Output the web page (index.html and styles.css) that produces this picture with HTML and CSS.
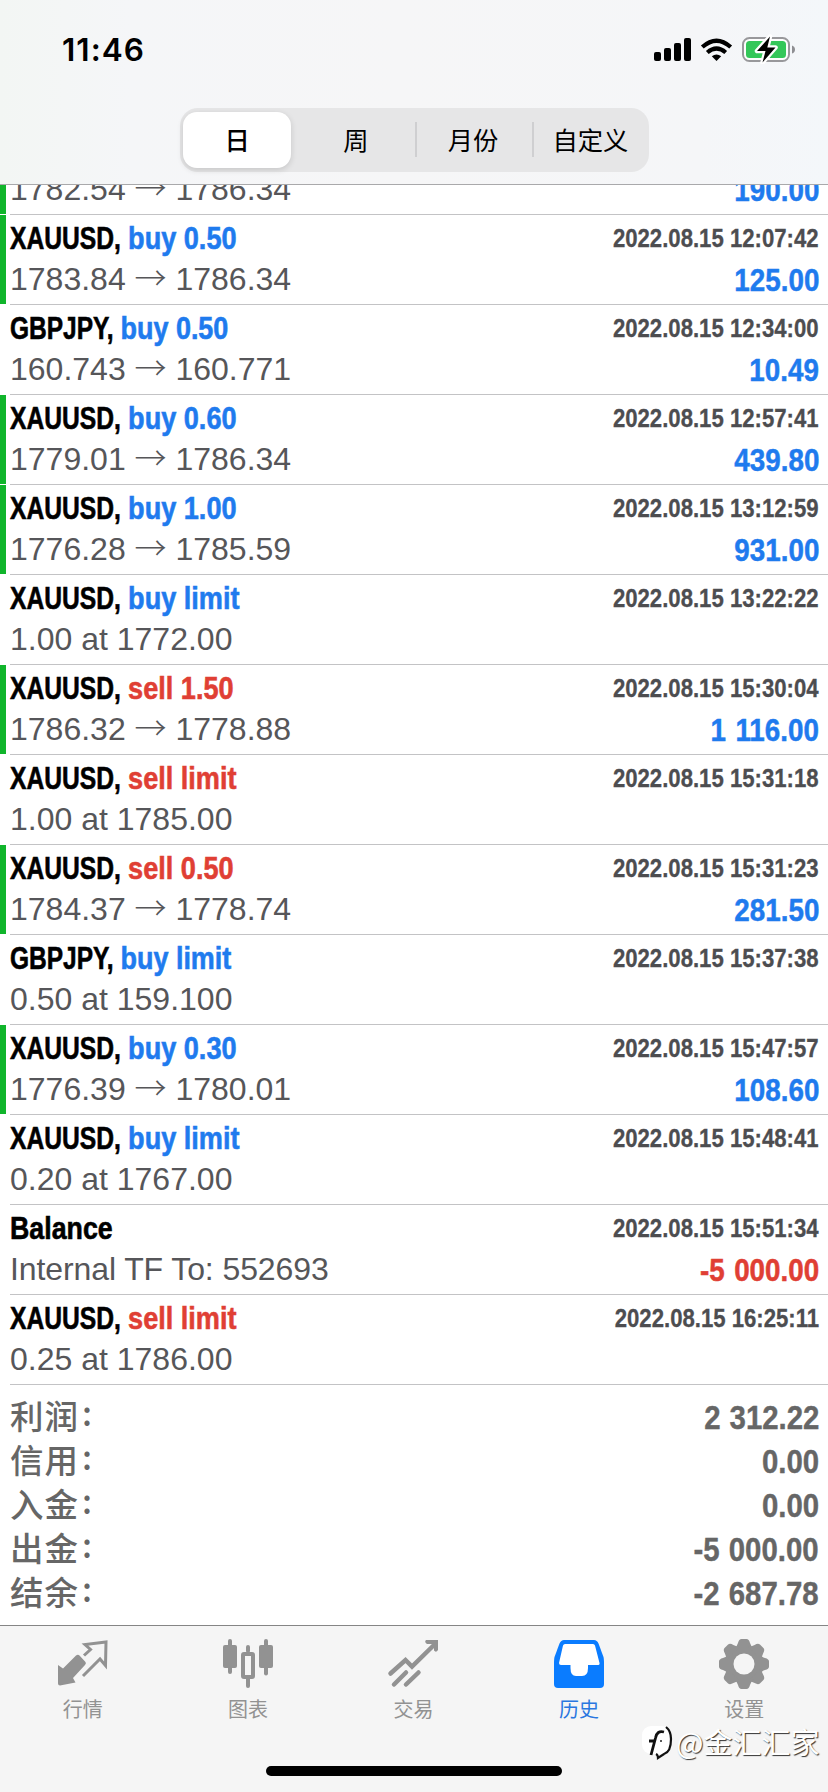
FILE: index.html
```html
<!DOCTYPE html>
<html lang="zh-CN">
<head>
<meta charset="utf-8">
<title>历史</title>
<link rel="stylesheet" href="styles.css">
</head>
<body>
<div class="screen">
  <header class="header">
    <div class="status">
      <span class="time">11:46</span>
      <svg class="status-icons" width="146" height="30" viewBox="0 0 146 30">
        <g fill="#000">
          <rect x="3" y="18" width="7" height="9" rx="2"/>
          <rect x="13" y="14" width="7" height="13" rx="2"/>
          <rect x="23" y="9" width="7" height="18" rx="2"/>
          <rect x="33" y="4" width="7" height="23" rx="2"/>
          <path d="M65.500 27 L60.800 22.300 Q65.500 18.600 70.200 22.300 Z"/>
        </g>
        <g fill="none" stroke="#000" stroke-width="4.200">
          <path d="M51.300 13 Q65.500 0.400 79.700 13"/>
          <path d="M56.300 18.500 Q65.500 10.600 74.700 18.500"/>
        </g>
        <rect x="92" y="4" width="46" height="23" rx="6.500" fill="#fdfdfd" stroke="#98989b" stroke-width="2"/>
        <rect x="95" y="7" width="40" height="17" rx="3.500" fill="#34c759"/>
        <path d="M141 11.500 Q144 12.500 144 15.500 Q144 18.500 141 19.500 Z" fill="#8e8e92"/>
        <path d="M119 2.500 L106 17 H114.500 L111.500 28.500 L124.500 13.500 H116.300 Z" fill="#000" stroke="#fff" stroke-width="4.500" stroke-linejoin="round" paint-order="stroke"/>
      </svg>
    </div>
    <nav class="segments">
      <span class="segment segment-on">日</span>
      <span class="segment">周</span>
      <span class="segment divided">月份</span>
      <span class="segment divided">自定义</span>
    </nav>
  </header>

  <main class="list">
    <div class="row win"><div class="top"><span class="name">XAUUSD, <b class="buy">buy 0.50</b></span><span class="date">2022.08.15 12:01:12</span></div><div class="bottom"><span>1782.54 <i>→</i> 1786.34</span><span class="amount">190.00</span></div></div>
    <div class="row win"><div class="top"><span class="name">XAUUSD, <b class="buy">buy 0.50</b></span><span class="date">2022.08.15 12:07:42</span></div><div class="bottom"><span>1783.84 <i>→</i> 1786.34</span><span class="amount">125.00</span></div></div>
    <div class="row"><div class="top"><span class="name gbp">GBPJPY, <b class="buy">buy 0.50</b></span><span class="date">2022.08.15 12:34:00</span></div><div class="bottom"><span>160.743 <i>→</i> 160.771</span><span class="amount">10.49</span></div></div>
    <div class="row win"><div class="top"><span class="name">XAUUSD, <b class="buy">buy 0.60</b></span><span class="date">2022.08.15 12:57:41</span></div><div class="bottom"><span>1779.01 <i>→</i> 1786.34</span><span class="amount">439.80</span></div></div>
    <div class="row win"><div class="top"><span class="name">XAUUSD, <b class="buy">buy 1.00</b></span><span class="date">2022.08.15 13:12:59</span></div><div class="bottom"><span>1776.28 <i>→</i> 1785.59</span><span class="amount">931.00</span></div></div>
    <div class="row"><div class="top"><span class="name">XAUUSD, <b class="buy">buy limit</b></span><span class="date">2022.08.15 13:22:22</span></div><div class="bottom"><span>1.00 at 1772.00</span></div></div>
    <div class="row win"><div class="top"><span class="name">XAUUSD, <b class="sell">sell 1.50</b></span><span class="date">2022.08.15 15:30:04</span></div><div class="bottom"><span>1786.32 <i>→</i> 1778.88</span><span class="amount">1 116.00</span></div></div>
    <div class="row"><div class="top"><span class="name">XAUUSD, <b class="sell">sell limit</b></span><span class="date">2022.08.15 15:31:18</span></div><div class="bottom"><span>1.00 at 1785.00</span></div></div>
    <div class="row win"><div class="top"><span class="name">XAUUSD, <b class="sell">sell 0.50</b></span><span class="date">2022.08.15 15:31:23</span></div><div class="bottom"><span>1784.37 <i>→</i> 1778.74</span><span class="amount">281.50</span></div></div>
    <div class="row"><div class="top"><span class="name gbp">GBPJPY, <b class="buy">buy limit</b></span><span class="date">2022.08.15 15:37:38</span></div><div class="bottom"><span>0.50 at 159.100</span></div></div>
    <div class="row win"><div class="top"><span class="name">XAUUSD, <b class="buy">buy 0.30</b></span><span class="date">2022.08.15 15:47:57</span></div><div class="bottom"><span>1776.39 <i>→</i> 1780.01</span><span class="amount">108.60</span></div></div>
    <div class="row"><div class="top"><span class="name">XAUUSD, <b class="buy">buy limit</b></span><span class="date">2022.08.15 15:48:41</span></div><div class="bottom"><span>0.20 at 1767.00</span></div></div>
    <div class="row"><div class="top"><span class="name plain">Balance</span><span class="date">2022.08.15 15:51:34</span></div><div class="bottom"><span class="note">Internal TF To: 552693</span><span class="amount loss">-5 000.00</span></div></div>
    <div class="row"><div class="top"><span class="name">XAUUSD, <b class="sell">sell limit</b></span><span class="date">2022.08.15 16:25:11</span></div><div class="bottom"><span>0.25 at 1786.00</span></div></div>
  </main>

  <section class="summary">
    <div class="total"><span class="label">利润<b>:</b></span><span class="value">2 312.22</span></div>
    <div class="total"><span class="label">信用<b>:</b></span><span class="value">0.00</span></div>
    <div class="total"><span class="label">入金<b>:</b></span><span class="value">0.00</span></div>
    <div class="total"><span class="label">出金<b>:</b></span><span class="value">-5 000.00</span></div>
    <div class="total"><span class="label">结余<b>:</b></span><span class="value">-2 687.78</span></div>
  </section>

  <footer class="tabs">
    <div class="tab">
      <svg width="52" height="52" viewBox="0 0 52 52">
        <path d="M1 28 L6 31.500 L19 18.500 Q21 17 22.500 18.500 L28.500 25 Q29.500 26.500 28 28 L16 41 L18.500 45.500 L3 48.500 Q1 48.500 1 46.500 Z" fill="#929292"/>
        <path d="M27 18.500 L33.500 12.500 L28 7.500 L49 5 L48.500 28.500 L43 22 L26 39" fill="none" stroke="#929292" stroke-width="3"/>
      </svg>
      <span>行情</span>
    </div>
    <div class="tab">
      <svg width="52" height="52" viewBox="0 0 52 52">
        <g fill="#929292">
          <rect x="1" y="8" width="14" height="23" rx="2"/><rect x="6" y="2" width="4" height="35" rx="2"/>
          <rect x="37" y="8" width="14" height="23" rx="2"/><rect x="42" y="2" width="4" height="36.500" rx="2"/>
          <rect x="24" y="8" width="4" height="8" rx="2"/><rect x="24" y="39" width="4" height="12" rx="2"/>
        </g>
        <rect x="21" y="17" width="10" height="23" rx="1" fill="none" stroke="#929292" stroke-width="4"/>
      </svg>
      <span>图表</span>
    </div>
    <div class="tab">
      <svg width="52" height="52" viewBox="0 0 52 52">
        <g fill="none" stroke="#929292" stroke-width="4.500" stroke-linecap="round">
          <path d="M3.500 36.500 L18.500 23 L25 29.500 L48 7"/>
          <path d="M7 47.500 L19 35.500 M19 47.500 L31.500 35.500"/>
        </g>
        <path d="M39 3 H51 V13 Q49 16 47 13.500 V8 L46 7 H40 Q37 5 39 3 Z" fill="#929292"/>
      </svg>
      <span>交易</span>
    </div>
    <div class="tab active">
      <svg width="52" height="52" viewBox="0 0 52 52">
        <path fill="#0a7cff" d="M11 3 H41 Q44 3 45.500 6.500 L50.500 20 Q51 22 51 25 V47 Q51 51 47 51 H5 Q1 51 1 47 V25 Q1 22 1.500 20 L6.500 6.500 Q8 3 11 3 Z"/>
        <path fill="#fff" d="M12 7 H40 Q41.500 7 42 8.500 L46.500 26 Q47 28 44.500 28 H35 V31 Q35 39 29 39 H23 Q17.500 39 17.500 31 V28 H8 Q6 28 6 26 L10 8.500 Q10.500 7 12 7 Z"/>
      </svg>
      <span>历史</span>
    </div>
    <div class="tab">
      <svg width="52" height="52" viewBox="-26 -27 52 52">
        <g fill="#929292">
          <circle r="18.500"/>
          <g id="teeth">
            <path id="tooth" d="M-9.500 -15 Q-7 -18 -6 -21 Q-5 -25 -2.500 -25 H2.500 Q5 -25 6 -21 Q7 -18 9.500 -15 Z"/>
            <use href="#tooth" transform="rotate(45)"/>
            <use href="#tooth" transform="rotate(90)"/>
            <use href="#tooth" transform="rotate(135)"/>
          </g>
          <use href="#teeth" transform="rotate(180)"/>
        </g>
        <circle r="10.500" fill="#f5f5f5"/>
      </svg>
      <span>设置</span>
    </div>
  </footer>

  <div class="home-bar"></div>
  <div class="watermark">
    <svg width="34" height="36" viewBox="0 0 34 36">
      <rect x="0" y="1" width="29" height="28" rx="9" fill="#fff"/>
      <path d="M24 2 Q29 6 29 14 Q29 27 22 29 L16 33 Q16 30 14 29" fill="none" stroke="#111" stroke-width="2.200"/>
      <path d="M22 7 Q15 5 13.500 13 L9 30 M7 16 H13" fill="none" stroke="#111" stroke-width="2.800"/>
      <circle cx="19" cy="16" r="1" fill="#222"/>
    </svg>
    <span>@金汇汇家</span>
  </div>
</div>
</body>
</html>
```
FILE: styles.css
```css
* { box-sizing: border-box; }

body {
  margin: 0;
  background: #fff;
  font-family: "Liberation Sans", "Noto Sans CJK SC", sans-serif;
}

.screen {
  position: relative;
  display: flex;
  flex-direction: column;
  width: 828px;
  height: 1792px;
  overflow: hidden;
}

/* Header */
.header {
  flex: none;
  display: flex;
  flex-direction: column;
  height: 185px;
  border-bottom: 1px solid #a9a9ab;
  background: linear-gradient(90deg, #f3f6f4 0, #f5f6f8 130px, #f6f6f7 400px, #f5f6f8 700px, #f4f7fa 100%);
}

.status {
  display: flex;
  justify-content: space-between;
  height: 108px;
  padding: 34px 31px 0 62px;
}

.time {
  font: 600 31.5px/32px Inter, sans-serif;
  letter-spacing: 1px;
}

.segments {
  display: grid;
  grid-template-columns: repeat(4, 1fr);
  width: 469px;
  height: 64px;
  margin-left: 180px;
  border-radius: 18px;
  background: #e6e6e7;
}

.segment {
  display: flex;
  align-items: center;
  justify-content: center;
  padding-bottom: 2px;
  font: 400 25.3px/36px "Noto Sans CJK SC", sans-serif;
}

.segment-on {
  margin: 4px 6px 4px 3px;
  border-radius: 14px;
  background: #fff;
  box-shadow: 0 2px 6px rgba(0, 0, 0, 0.14);
  font-weight: 500;
}

.divided {
  background: linear-gradient(#cfcfd1, #cfcfd1) 0 14px / 2px 35px no-repeat;
}

/* Deals */
.list {
  flex: none;
  display: flex;
  flex-direction: column;
  justify-content: flex-end;
  height: 1200px;
  overflow: hidden;
}

.row {
  flex: none;
  height: 90px;
  padding: 3px 9px 0 10px;
  background: linear-gradient(#c3c3c5, #c3c3c5) 10px 100% / 100% 1px no-repeat;
}

.win {
  background:
    linear-gradient(#10b52b, #10b52b) 0 0 / 6px 89px no-repeat,
    linear-gradient(#c3c3c5, #c3c3c5) 10px 100% / 100% 1px no-repeat;
}

.top, .bottom {
  display: flex;
  justify-content: space-between;
  height: 41px;
  line-height: 41px;
  white-space: nowrap;
}

.name {
  font-size: 31.5px;
  font-weight: 700;
  -webkit-text-stroke: 0.6px;
  transform: scaleX(0.782);
  transform-origin: left;
}

.name b {
  display: inline-block;
  transform: scaleX(1.1);
  transform-origin: left;
}

.gbp { transform: scaleX(0.778); }
.plain { transform: scaleX(0.85); }

.buy { color: #1f7bee; }
.sell { color: #e03f34; }

.date {
  color: #4d4d50;
  font-size: 25.7px;
  font-weight: 700;
  -webkit-text-stroke: 0.3px;
  transform: scaleX(0.862);
  transform-origin: right;
}

.bottom {
  color: #565659;
  font-size: 32px;
}

.note { letter-spacing: -0.1px; }

.bottom i {
  font: 300 32px/1 "Noto Sans CJK SC", sans-serif;
}

.amount {
  padding-top: 1px;
  color: #1f7bee;
  font-size: 31.5px;
  font-weight: 700;
  word-spacing: 2px;
  -webkit-text-stroke: 0.5px;
  transform: scaleX(0.882);
  transform-origin: right;
}

.loss { color: #e03f34; }

/* Totals */
.summary {
  flex: none;
  height: 240px;
  padding: 10px 9px 0 10px;
  color: #666;
}

.total {
  display: flex;
  justify-content: space-between;
  height: 44px;
  line-height: 44px;
}

.label {
  margin-top: -2px;
  font-family: "Noto Sans CJK SC", sans-serif;
  font-size: 33.5px;
  font-weight: 500;
  letter-spacing: 1px;
}

.label b {
  display: inline-block;
  margin-left: 3px;
  font-weight: 500;
  transform: translateY(-3px);
}

.value {
  padding-top: 1px;
  font-size: 33.5px;
  font-weight: 700;
  word-spacing: 1px;
  -webkit-text-stroke: 0.4px;
  transform: scaleX(0.877);
  transform-origin: right;
}

/* Tab bar */
.tabs {
  flex: none;
  display: grid;
  grid-template-columns: repeat(5, 1fr);
  height: 167px;
  padding: 11px 1px 0 0;
  border-top: 1px solid #858585;
  background: #f5f5f5;
}

.tab {
  display: flex;
  flex-direction: column;
  align-items: center;
  color: #929292;
  font: 400 20px/28px "Noto Sans CJK SC", sans-serif;
}

.tab span { margin-top: 6px; }
.active { color: #2a77e0; }

.home-bar {
  position: absolute;
  left: 266px;
  top: 1766px;
  width: 296px;
  height: 10px;
  border-radius: 5px;
  background: #000;
}

.watermark {
  position: absolute;
  left: 642px;
  top: 1725px;
  display: flex;
  align-items: center;
  color: #fff;
  font: 400 29px/34px "Noto Sans CJK SC", sans-serif;
  text-shadow: 1px 1px 1px #333;
}

.watermark span { margin-top: -4px; }
```
